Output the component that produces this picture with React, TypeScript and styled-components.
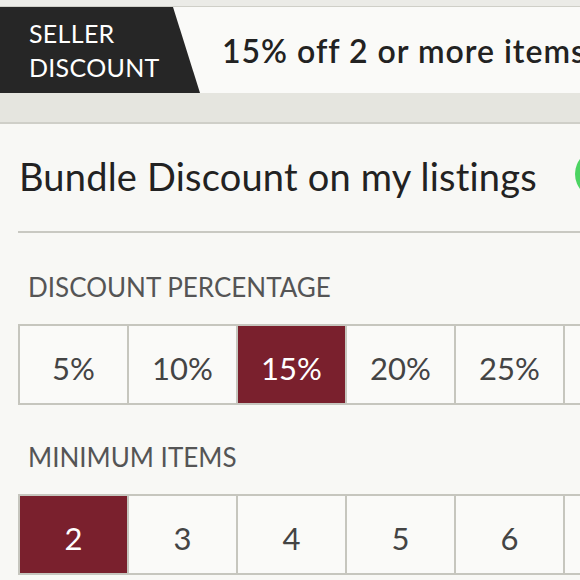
import React, { useState } from "react";
import styled, { createGlobalStyle } from "styled-components";

const Global = createGlobalStyle`
  html, body { margin: 0; padding: 0; background: #f8f8f5; }
  body { font-family: Lato, "Open Sans", sans-serif; width: 580px; height: 580px; overflow: hidden; }
`;

const Page = styled.div`
  width: 580px;
  height: 580px;
  overflow: hidden;
  background: #f8f8f5;
`;

const TopStrip = styled.div`
  height: 6px;
  background: #ebebe7;
  border-bottom: 1px solid #cfcfc8;
`;

const Header = styled.div`
  height: 86px;
  display: flex;
  align-items: center;
  background: #fafaf8;
  white-space: nowrap;
  overflow: hidden;
`;

const Badge = styled.div`
  width: 200px;
  height: 100%;
  flex: none;
  background: #262626;
  clip-path: polygon(0 0, 173px 0, 200px 100%, 0 100%);
  color: #fff;
  font-size: 25px;
  letter-spacing: 0.3px;
  line-height: 34px;
  display: flex;
  flex-direction: column;
  justify-content: center;
  padding-left: 29px;
  box-sizing: border-box;
`;

const Offer = styled.div`
  margin-left: 22px;
  font-size: 32px;
  letter-spacing: 1px;
  font-weight: 600;
  color: #222;
`;

const Band = styled.div`
  height: 29px;
  background: #e5e5df;
  border-bottom: 2px solid #cfcfc8;
`;

const Content = styled.div`
  padding-left: 18px;
`;

const TitleRow = styled.div`
  height: 109px;
  display: flex;
  align-items: center;
  justify-content: space-between;
  border-bottom: 2px solid #c9c9c2;
  padding: 0 0 4px 1px;
  box-sizing: border-box;
`;

const Title = styled.div`
  font-size: 38px;
  letter-spacing: 0.2px;
  color: #222;
  white-space: nowrap;
`;

const Toggle = styled.div`
  width: 50px;
  height: 50px;
  border-radius: 25px;
  background: #4cd462;
  flex: none;
  margin-right: -45px;
  margin-top: -4px;
`;

const Label = styled.div<{ $top: number }>`
  margin-top: ${(p) => p.$top}px;
  padding-left: 10px;
  font-size: 26px;
  line-height: 30px;
  color: #555;
  white-space: nowrap;
`;

const Segment = styled.div<{ $top: number }>`
  margin-top: ${(p) => p.$top}px;
  display: flex;
  width: max-content;
  border-top: 2px solid #c6c6be;
  border-bottom: 2px solid #c6c6be;
`;

const Cell = styled.div<{ $on: boolean }>`
  width: 109px;
  height: 77px;
  flex: none;
  display: flex;
  align-items: center;
  justify-content: center;
  padding-top: 7px;
  box-sizing: border-box;
  border-left: 2px solid #c6c6be;
  background: ${(p) => (p.$on ? "#7a202d" : "#fafaf8")};
  color: ${(p) => (p.$on ? "#fff" : "#444")};
  font-size: 31px;
  cursor: pointer;
`;

const percents = ["5%", "10%", "15%", "20%", "25%", "30%"];
const items = ["2", "3", "4", "5", "6", "7"];

export default function App() {
  const [pct, setPct] = useState("15%");
  const [min, setMin] = useState("2");
  return (
    <Page>
      <Global />
      <TopStrip />
      <Header>
        <Badge>
          <span>SELLER</span>
          <span>DISCOUNT</span>
        </Badge>
        <Offer>15% off 2 or more items</Offer>
      </Header>
      <Band />
      <Content>
        <TitleRow>
          <Title>Bundle Discount on my listings</Title>
          <Toggle />
        </TitleRow>
        <Label $top={39}>DISCOUNT PERCENTAGE</Label>
        <Segment $top={22}>
          {percents.map((v) => (
            <Cell key={v} $on={v === pct} onClick={() => setPct(v)}>
              {v}
            </Cell>
          ))}
        </Segment>
        <Label $top={37}>MINIMUM ITEMS</Label>
        <Segment $top={22}>
          {items.map((v) => (
            <Cell key={v} $on={v === min} onClick={() => setMin(v)}>
              {v}
            </Cell>
          ))}
        </Segment>
      </Content>
    </Page>
  );
}
